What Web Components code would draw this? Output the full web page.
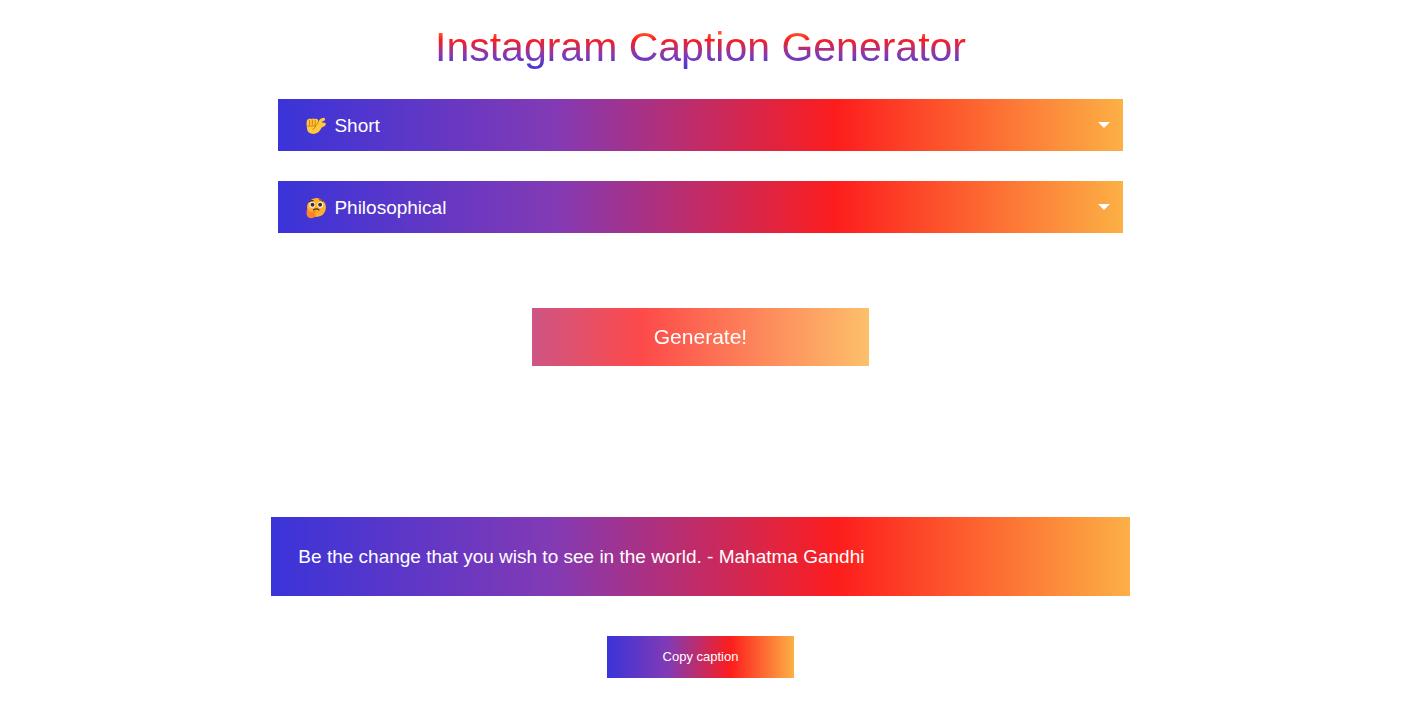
<!DOCTYPE html>
<html lang="en">
<head>
<meta charset="utf-8">
<title>Instagram Caption Generator</title>
<style>
body {
  margin: 0;
  background: #fff;
  font-family: "Liberation Sans", Arial, sans-serif;
  --brand: #3a34d9, #833ab4 33%, #fd1d1d 66%, #fcb045;
}
</style>
</head>
<body>
<caption-app></caption-app>
<script>
const fist = `<svg viewBox="0 0 22 22" aria-hidden="true">
<path fill="#ffc83d" d="M1.800 6Q1.800 3.800 3.600 4.200Q4.800 3 6.500 3.900Q8.300 2.900 9.800 4Q12 3.200 13 5L13.400 7L14.300 5Q15.500 3 18.500 2.800Q20.300 3 20.100 4.600Q20 5.800 18.300 6Q17 6.300 17.200 7.800L19.200 7.600Q21.200 8 20.800 9.700Q20.300 11 18.800 11.500L16.500 12.800Q14 18.600 8.800 18.900Q2.400 19 2 13.500Q1 9 1.800 6Z"/>
<path fill="none" stroke="#d67d00" stroke-width="1" stroke-linecap="round" d="M4.500 5.500V9.500M7.300 5V9.500M10.200 5.500V9.500M2.500 11Q7 11.500 11 10.500Q13 9 13.300 7M10.800 11.200L8 14.500"/>
</svg>`;
const thinking = `<svg viewBox="0 0 22 22" aria-hidden="true">
<circle cx="11.500" cy="10.500" r="9.500" fill="#ffb02e"/>
<circle cx="7.300" cy="7.800" r="2.900" fill="#fff"/><circle cx="15.300" cy="7.800" r="2.900" fill="#fff"/>
<circle cx="7.500" cy="7.700" r="2" fill="#402a32"/><circle cx="15.100" cy="7.700" r="2" fill="#402a32"/>
<path d="M4.300 4.700Q6.300 3.200 8.300 3.800M14.500 2.800Q16.500 2.700 17.900 4.200M8.500 13Q11.500 10.800 14 13" fill="none" stroke="#402a32" stroke-width="1.100" stroke-linecap="round"/>
<path d="M1.700 13Q2.700 12 4 13.500L5.500 15L10.500 13.500Q12.200 13.500 11.700 14.700L9 16.500L11 17Q10.500 21 6 21.300Q1.500 20.800 1.500 16Z" fill="#ff822d"/>
</svg>`;

customElements.define("gradient-title", class extends HTMLElement {
  constructor() {
    super();
    this.attachShadow({ mode: "open" }).innerHTML = `
<style>
:host { display: block; text-align: center; }
h1 {
  display: inline-block; margin: 0; font-size: 41px; font-weight: 400; line-height: 48px;
  color: transparent; background: linear-gradient(to top, var(--brand));
  -webkit-background-clip: text; background-clip: text;
}
</style>
<h1><slot></slot></h1>`;
  }
});

customElements.define("caption-select", class extends HTMLElement {
  constructor() {
    super();
    const options = this.getAttribute("options").split(",");
    const icon = this.getAttribute("icon") === "fist" ? fist : thinking;
    this.attachShadow({ mode: "open" }).innerHTML = `
<style>
:host { display: grid; align-items: center; background: linear-gradient(to right, var(--brand)); }
select, .icon, .arrow { grid-area: 1 / 1; }
select {
  appearance: none; width: 100%; height: 52px; margin: 0; padding: 0 36px 0 56px;
  border: 0; border-radius: 0; background: transparent; color: #fff;
  font: inherit; font-size: 19px; cursor: pointer;
}
option { color: #222; }
.icon { width: 22px; height: 22px; margin: 2px 0 0 27px; pointer-events: none; }
.icon svg { display: block; width: 22px; height: 22px; }
.arrow { justify-self: end; width: 12px; height: 6px; margin-right: 13px; fill: #fff; pointer-events: none; }
</style>
<select aria-label="${this.getAttribute("label")}">${options.map(o => `<option>${o}</option>`).join("")}</select>
<span class="icon">${icon}</span>
<svg class="arrow" viewBox="0 0 12 6" aria-hidden="true"><path d="M0 0H12L6 6Z"/></svg>`;
  }
});

customElements.define("gradient-button", class extends HTMLElement {
  constructor() {
    super();
    this.attachShadow({ mode: "open" }).innerHTML = `
<style>
:host { display: block; }
button {
  display: block; width: 100%; margin: 0; padding: 0 0 2px; height: 42px; border: 0;
  background: linear-gradient(to right, var(--brand)); color: #fff;
  font: inherit; font-size: 13px; cursor: pointer;
}
:host([large]) button {
  height: 58px; padding: 0; font-size: 21px; opacity: .8;
  background-size: 200% 100%; background-position: right;
}
</style>
<button type="button"><slot></slot></button>`;
  }
});

customElements.define("caption-result", class extends HTMLElement {
  constructor() {
    super();
    this.attachShadow({ mode: "open" }).innerHTML = `
<style>
:host { display: block; background: linear-gradient(to right, var(--brand)); color: #fff; }
p { margin: 0; padding: 28px 27px; font-size: 19px; line-height: 23px; }
</style>
<p><slot></slot></p>`;
  }
});

customElements.define("caption-app", class extends HTMLElement {
  constructor() {
    super();
    this.attachShadow({ mode: "open" }).innerHTML = `
<style>
:host { display: block; }
main { display: flex; flex-direction: column; align-items: center; padding: 23px 6px 40px 0; }
.options { display: grid; gap: 30px; width: 60vw; margin-top: 28px; }
.generate { width: 24vw; margin-top: 75px; }
caption-result { width: 61vw; margin-top: 151px; }
.copy { width: 187px; margin-top: 40px; }
</style>
<main>
  <gradient-title>Instagram Caption Generator</gradient-title>
  <div class="options">
    <caption-select label="Caption length" icon="fist" options="Short,Medium,Long"></caption-select>
    <caption-select label="Caption mood" icon="thinking" options="Philosophical,Funny,Romantic"></caption-select>
  </div>
  <gradient-button class="generate" large>Generate!</gradient-button>
  <caption-result>Be the change that you wish to see in the world. - Mahatma Gandhi</caption-result>
  <gradient-button class="copy">Copy caption</gradient-button>
</main>`;
  }
});
</script>
</body>
</html>
